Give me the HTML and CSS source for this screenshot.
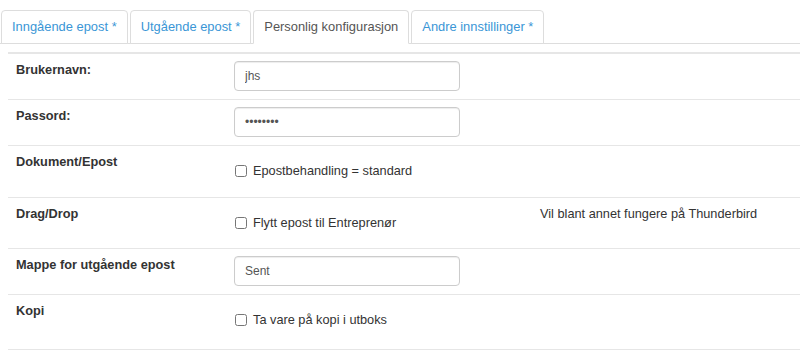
FILE: index.html
```html
<!DOCTYPE html>
<html>
<head>
	<title>Personlig konfigurasjon</title>
	<meta http-equiv="Content-Type" content="text/html;charset=utf-8"/>
	<link rel="stylesheet" href="styles.css">
</head>
<body>
<ul class="tabs">
	<li><a href="#">Inngående epost *</a></li>
	<li><a href="#">Utgående epost *</a></li>
	<li class="active"><a href="#">Personlig konfigurasjon</a></li>
	<li><a href="#">Andre innstillinger *</a></li>
</ul>
<div class="tab-content">
	<table class="settings">
		<tr>
			<td class="lbl">Brukernavn:</td>
			<td class="val"><input class="field" type="text" value="jhs"/></td>
			<td class="note"></td>
		</tr>
		<tr>
			<td class="lbl">Passord:</td>
			<td class="val"><input class="field" type="password" value="hemmelig"/></td>
			<td class="note"></td>
		</tr>
		<tr>
			<td class="lbl">Dokument/Epost</td>
			<td class="val">
				<div class="check"><label><input type="checkbox"/>Epostbehandling = standard</label></div>
			</td>
			<td class="note"></td>
		</tr>
		<tr>
			<td class="lbl">Drag/Drop</td>
			<td class="val">
				<div class="check"><label><input type="checkbox"/>Flytt epost til Entreprenør</label></div>
			</td>
			<td class="note">Vil blant annet fungere på Thunderbird</td>
		</tr>
		<tr>
			<td class="lbl">Mappe for utgående epost</td>
			<td class="val"><input class="field" type="text" value="Sent"/></td>
			<td class="note"></td>
		</tr>
		<tr class="last">
			<td class="lbl">Kopi</td>
			<td class="val">
				<div class="check"><label><input type="checkbox"/>Ta vare på kopi i utboks</label></div>
			</td>
			<td class="note"></td>
		</tr>
	</table>
</div>
</body>
</html>
```
FILE: styles.css
```css
* {
	box-sizing: border-box;
}

body {
	margin: 0px;
	padding: 0px;
	font-family: "Liberation Sans", Arial, sans-serif;
	font-size: 12.75px;
	line-height: 18px;
	color: #333;
	background: #fff;
}

.tabs {
	list-style: none;
	margin: 0px;
	padding: 10px 0px 0px 1px;
	display: flex;
	border-bottom: 1px solid #ddd;
	font-size: 12.9px;
}

.tabs li {
	margin: 0px 2px -1px 0px;
}

.tabs a {
	display: block;
	padding: 7px 10px;
	border: 1px solid #ddd;
	border-radius: 4px 4px 0px 0px;
	color: #3a96d6;
	text-decoration: none;
	background: #fff;
}

.tabs li.active a {
	color: #555;
	border-bottom-color: #fff;
}

.tab-content {
	padding: 8px 0px 0px 8px;
}

.settings {
	width: 100%;
	border-collapse: collapse;
	border-top: 2px solid #e6e6e6;
}

.settings td {
	vertical-align: top;
	padding: 7px 8px 8px;
	border-bottom: 1px solid #e6e6e6;
}

.settings td.lbl {
	width: 218px;
	font-weight: bold;
}

.settings td.val {
	width: 306px;
}

.settings tr.last td {
	padding-bottom: 11px;
}

.field {
	display: block;
	width: 226px;
	height: 30px;
	padding: 5px 10px;
	font-family: "Liberation Sans", Arial, sans-serif;
	font-size: 12px;
	color: #555;
	border: 1px solid #ccc;
	border-radius: 4px;
	box-shadow: inset 0 1px 1px rgba(0, 0, 0, .075);
	margin: 0px;
}

.check {
	margin: 9px 0px 8px;
	line-height: 18.5px;
}

.check label {
	display: flex;
	align-items: center;
}

.check input {
	width: 12px;
	height: 12px;
	margin: 0px 6px 0px 1px;
}
```
